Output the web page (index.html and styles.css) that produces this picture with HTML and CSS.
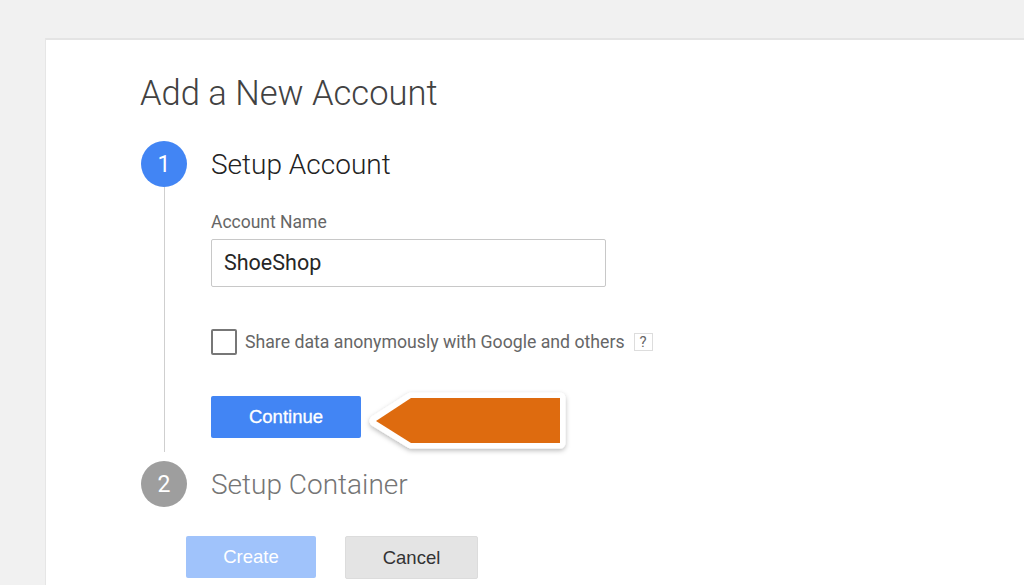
FILE: index.html
```html
<!DOCTYPE html>
<html>
<head>
<meta charset="utf-8">
<link rel="stylesheet" href="styles.css">
</head>
<body>
<div class="card">
  <h1 class="title">Add a New Account</h1>
  <div class="step">
    <div class="rail">
      <div class="circle active">1</div>
      <div class="rail-line"></div>
    </div>
    <div class="step-body">
      <div class="step-title">Setup Account</div>
      <label class="field-label">Account Name</label>
      <div class="input">ShoeShop</div>
      <div class="check-row">
        <span class="checkbox"></span>
        <span class="check-text">Share data anonymously with Google and others</span>
        <span class="help">?</span>
      </div>
      <div class="continue-row">
        <button class="btn btn-primary">Continue</button>
        <svg class="arrow" width="214" height="74" viewBox="0 0 214 74">
          <defs>
            <filter id="sh" x="-10%" y="-20%" width="120%" height="150%">
              <feDropShadow dx="0" dy="2" stdDeviation="2.5" flood-color="#000" flood-opacity="0.28"/>
            </filter>
          </defs>
          <polygon points="13,36 49,13 198,13 198,58 49,58" fill="#fff" stroke="#fff" stroke-width="11" stroke-linejoin="round" filter="url(#sh)"/>
          <polygon points="14,36 49,13 198,13 198,58 49,58" fill="#de6b0f"/>
        </svg>
      </div>
    </div>
  </div>
  <div class="step step2">
    <div class="rail">
      <div class="circle inactive">2</div>
    </div>
    <div class="step-body">
      <div class="step-title muted">Setup Container</div>
    </div>
  </div>
  <div class="actions">
    <button class="btn btn-disabled">Create</button>
    <button class="btn btn-cancel">Cancel</button>
  </div>
</div>
</body>
</html>
```
FILE: styles.css
```css
html, body {
  margin: 0;
  padding: 0;
  height: 100%;
  overflow: hidden;
}
body {
  background: #f1f1f1;
  font-family: Roboto, "Liberation Sans", sans-serif;
  padding: 38px 0 0 45px;
  box-sizing: border-box;
}
.card {
  background: #fff;
  border-top: 2px solid #e4e4e4;
  border-left: 1px solid #e6e6e6;
  height: 100%;
  box-sizing: border-box;
  padding: 33px 0 0 95px;
}
.title {
  margin: 0 0 0 -1px;
  font-size: 34.5px;
  font-weight: 300;
  color: #424242;
  line-height: 40px;
}
.step {
  display: flex;
  gap: 24px;
  margin-top: 28px;
}
.rail {
  width: 46px;
  display: flex;
  flex-direction: column;
  align-items: center;
  flex: none;
}
.circle {
  width: 46px;
  height: 46px;
  border-radius: 50%;
  color: #fff;
  font-size: 23px;
  font-weight: 400;
  line-height: 47px;
  text-align: center;
  flex: none;
}
.circle.active { background: #4285f4; }
.circle.inactive { background: #9e9e9e; }
.rail-line {
  flex: 1;
  width: 1px;
  background: #cfcfcf;
}
.step-body {
  display: flex;
  flex-direction: column;
  align-items: flex-start;
  padding-bottom: 14px;
}
.step-title {
  font-size: 28px;
  font-weight: 300;
  color: #222;
  line-height: 47px;
  height: 46px;
  white-space: nowrap;
}
.step-title.muted { color: #757575; }
.field-label {
  margin-top: 25px;
  font-size: 17.5px;
  color: #666;
  line-height: 20px;
}
.input {
  margin-top: 7px;
  width: 395px;
  height: 48px;
  box-sizing: border-box;
  border: 1px solid #c8c8c8;
  border-radius: 2px;
  padding: 0 12px;
  font-size: 21.5px;
  font-weight: 400;
  color: #262626;
  line-height: 46px;
}
.check-row {
  margin-top: 42px;
  display: flex;
  align-items: center;
  height: 26px;
}
.checkbox {
  width: 26px;
  height: 26px;
  box-sizing: border-box;
  border: 2px solid #777;
  border-radius: 2px;
}
.check-text {
  margin-left: 8px;
  font-size: 17.7px;
  color: #666;
  white-space: nowrap;
}
.help {
  margin-left: 9px;
  width: 19px;
  height: 18px;
  box-sizing: border-box;
  border: 1px solid #ddd;
  font-size: 15px;
  color: #666;
  line-height: 16px;
  text-align: center;
}
.continue-row {
  margin-top: 41px;
  position: relative;
  display: flex;
}
.btn {
  font-family: "Liberation Sans", Arial, sans-serif;
  font-size: 18.5px;
  height: 42px;
  border-radius: 2px;
  border: none;
  padding: 0;
  cursor: pointer;
}
.btn-primary {
  width: 150px;
  background: #4285f4;
  color: #fff;
  -webkit-text-stroke: 0.3px #fff;
}
.arrow {
  position: absolute;
  left: 151px;
  top: -11px;
}
.step2 {
  margin-top: 9px;
}
.step2 .step-body { padding-bottom: 0; }
.actions {
  margin-top: 29px;
  margin-left: 45px;
  display: flex;
  gap: 29px;
}
.btn-disabled {
  width: 130px;
  background: #a0c3fb;
  color: #fff;
}
.btn-cancel {
  width: 133px;
  height: 43px;
  background: #e4e4e4;
  border: 1px solid #dcdcdc;
  color: #333;
}
```
